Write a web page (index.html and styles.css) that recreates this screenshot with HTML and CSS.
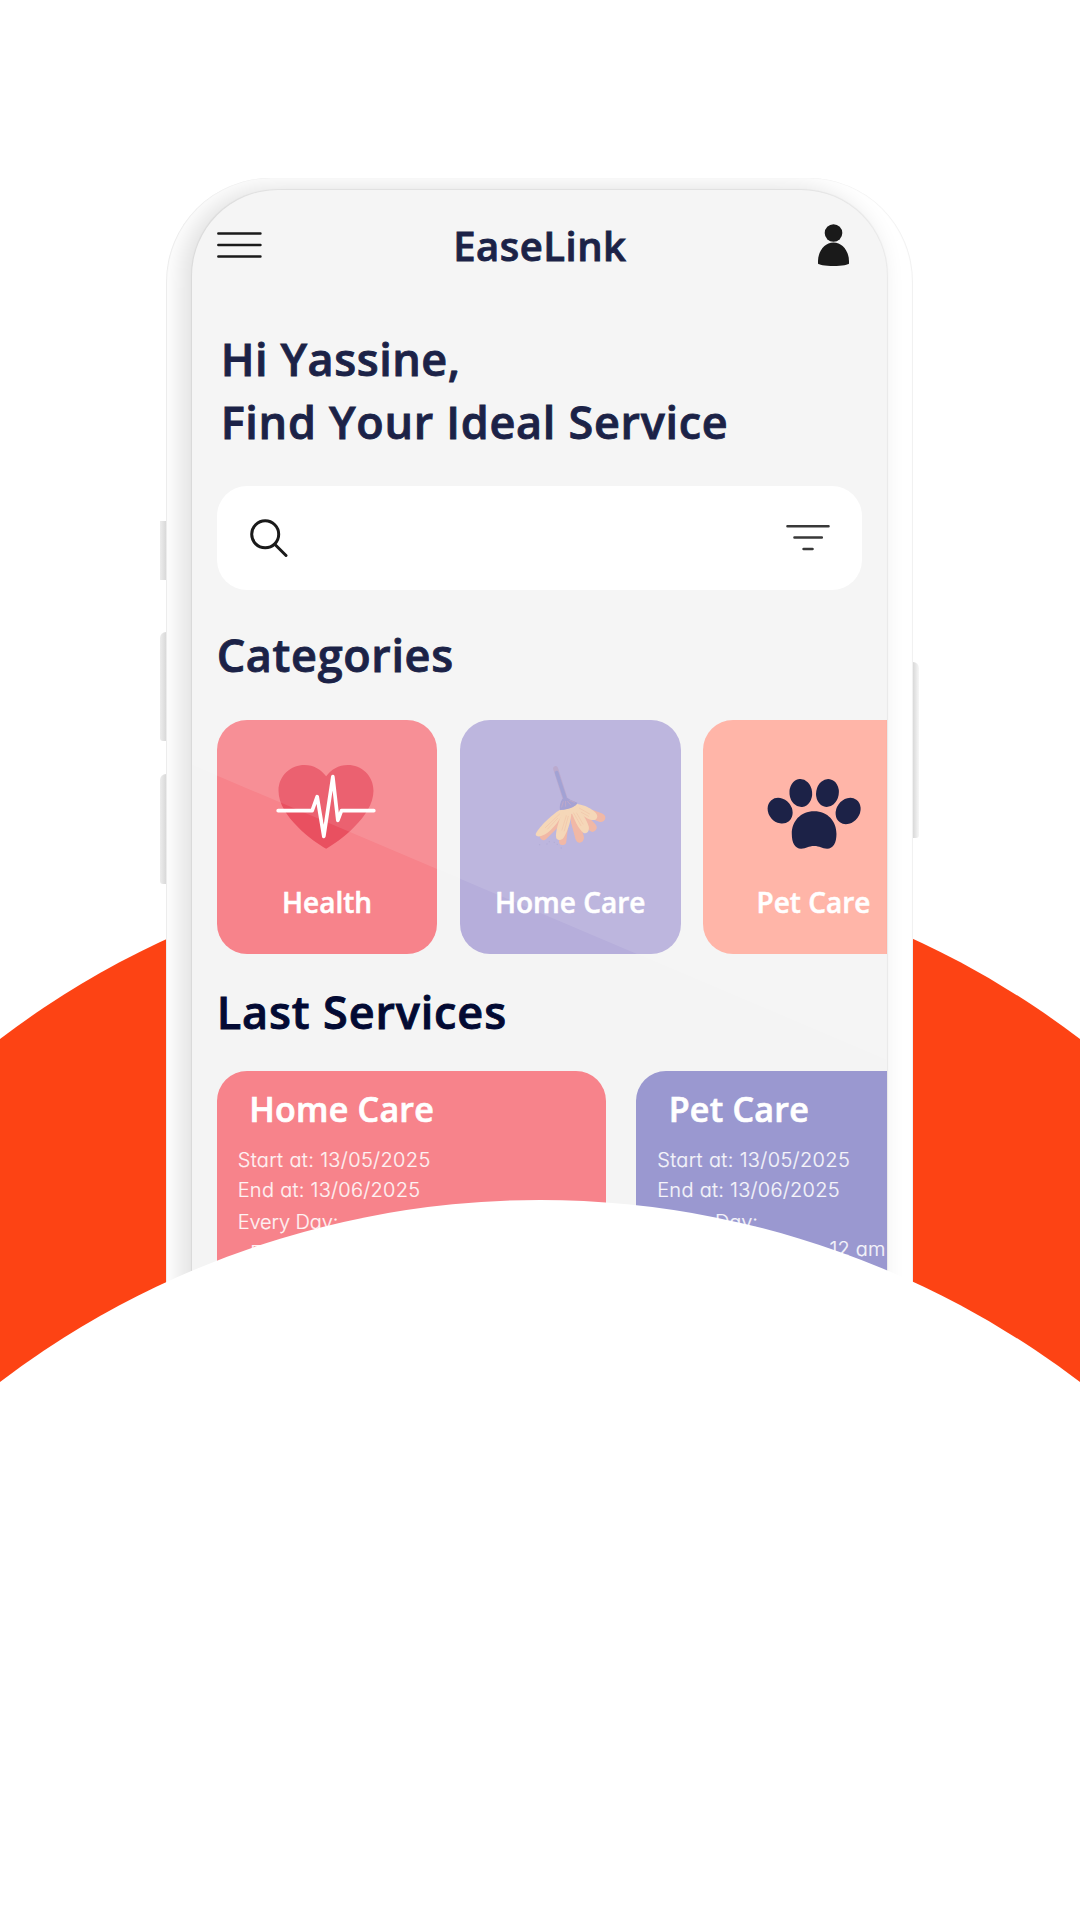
FILE: index.html
```html
<!DOCTYPE html>
<html lang="en">
<head>
<meta charset="utf-8">
<title>EaseLink</title>
<link rel="stylesheet" href="styles.css">
</head>
<body>
<div class="stage">
  <div class="disc disc--orange"></div>
  <div class="phone">
    <i class="key key--mute"></i>
    <i class="key key--up"></i>
    <i class="key key--down"></i>
    <i class="key key--power"></i>
    <div class="bezel">
      <main class="screen">
        <header class="topbar">
          <svg class="menu" viewBox="0 0 45 28" fill="none" stroke="#000" stroke-width="2.4" stroke-linecap="round"><path d="M1.3 2.5H43.500M1.300 14H43.500M1.300 25.500H43.500"/></svg>
          <h1 class="brand">EaseLink</h1>
          <svg class="user" viewBox="0 0 31 42"><circle cx="15.500" cy="9" r="8.800"/><path d="M15.500 18.500C24 18.500 31 27 31 37V39.500C31 40.500 24 42 15.500 42S0 40.500 0 39.500V37C0 27 7 18.500 15.500 18.500Z"/></svg>
        </header>
        <p class="greeting">Hi Yassine,<br><span class="greeting-sub">Find Your Ideal Service</span></p>
        <div class="search">
          <svg class="lens" viewBox="0 0 38 39" fill="none" stroke="#000" stroke-width="3"><circle cx="15.200" cy="15.300" r="13.500"/><path d="M25 25.500L36 36.500" stroke-linecap="round"/></svg>
          <svg class="filter" viewBox="0 0 44 28" fill="none" stroke="#222" stroke-width="2.600" stroke-linecap="round"><path d="M1.500 2.200H42.500M8.500 13.500H35.800M17.600 25H26.500"/></svg>
        </div>
        <h2 class="heading heading--categories">Categories</h2>
        <div class="categories">
          <article class="category category--health">
            <svg class="art" viewBox="0 0 220.500 163.400"><g transform="translate(-26.500 -20) scale(.33333)">
              <path fill="#e95060" d="M407 446C370 425 264 350 264 272C264 226 302 195 342 195C370 195 392 209 407 229C421 209 444 195 472 195C512 195 549 226 549 272C549 350 444 425 407 446Z"/>
              <path fill="none" stroke="#fff" stroke-width="11" stroke-linecap="round" stroke-linejoin="round" d="M263 332H365L380 290L400 409L427 230L442 361L453 332H550"/>
            </g></svg>
            <h3 class="label">Health</h3>
          </article>
          <article class="category category--home">
            <svg class="art" viewBox="0 0 220.500 163.400"><g transform="translate(60.300 35) scale(.33333)">
              <g stroke="#f0b09c" stroke-linecap="round" stroke-width="22">
                <path d="M140 175L70 244M135 190L127 259M160 185L178 252M180 185L217 218M180 170L244 188" />
                <path stroke-width="26" d="M165 200L178 248M195 195L216 217M215 178L241 188"/>
              </g>
              <g fill="#f4d3b0">
                <path d="M118 165C95 178 50 222 46 238C48 248 62 245 75 238C98 224 122 190 132 168Z"/>
                <path d="M130 166C117 190 103 235 108 250C113 258 125 257 131 247C145 222 154 190 153 168Z"/>
                <path d="M150 163C160 190 176 226 190 234C202 238 208 226 205 214C200 196 186 175 172 155Z"/>
                <path d="M168 148C195 148 232 170 231 185C229 198 214 197 203 191C187 183 176 170 165 158Z"/>
              </g>
              <path fill="#f4d3b0" d="M119 165C140 163 160 156 171 146L185 160L160 176L135 178Z"/>
              <g fill="none" stroke="#f0bea0" stroke-width="2" stroke-linecap="round"><path d="M118 177L75 218M112 190L82 222M138 182L125 225M144 184L132 228M160 174L182 212M169 174L188 207M178 160L208 177M183 172L205 184"/></g>
              <path fill="none" stroke="#b4a1c8" stroke-width="15" stroke-linecap="round" d="M106 41L134 130"/>
              <path fill="none" stroke="#9898d0" stroke-width="11" stroke-linecap="round" d="M109 53L135 132"/>
              <path fill="#9c98ce" d="M126 132C136 128 143 128 150 134L171 143C171 151 151 163 119 165C117 155 120 140 126 132Z"/>
              <path fill="none" stroke="#bd9fc0" stroke-width="2.500" stroke-linecap="round" d="M129 140L124 156M136 139V154M142 139L151 150M148 136L163 142"/>
              <g fill="#aaa4d0"><circle cx="58" cy="269" r="2"/><circle cx="80" cy="267" r="2"/><circle cx="87" cy="260" r="2"/><circle cx="102" cy="262" r="2"/><circle cx="111" cy="268" r="2"/><circle cx="123" cy="279" r="2"/></g>
            </g></svg>
            <h3 class="label">Home Care</h3>
          </article>
          <article class="category category--pet">
            <svg class="art" viewBox="0 0 220.500 163.400"><g transform="translate(-13.200 -20) scale(.33333)" fill="#030a33">
              <ellipse cx="333" cy="279" rx="34" ry="42" transform="rotate(-6 333 279)"/>
              <ellipse cx="413" cy="279" rx="34" ry="42" transform="rotate(10 413 279)"/>
              <ellipse cx="271" cy="332" rx="35" ry="41" transform="rotate(-40 271 332)"/>
              <ellipse cx="475" cy="333" rx="35" ry="42" transform="rotate(36 475 333)"/>
              <path d="M373 334C414 334 440 364 440 402C440 428 431 446 412 446C396 446 390 438 373 438C356 438 350 446 334 446C315 446 306 428 306 402C306 364 332 334 373 334Z"/>
            </g></svg>
            <h3 class="label">Pet Care</h3>
          </article>
        </div>
        <h2 class="heading heading--last">Last Services</h2>
        <div class="services">
          <article class="service service--home">
            <h3 class="service-name">Home Care</h3>
            <p class="date date--start">Start at: 13/05/2025</p>
            <p class="date date--end">End at: 13/06/2025</p>
            <p class="days">Every Day:</p>
            <p class="slot slot--low"><span>From 09 am to</span><span>12 am</span></p>
          </article>
          <article class="service service--pet">
            <h3 class="service-name">Pet Care</h3>
            <p class="date date--start">Start at: 13/05/2025</p>
            <p class="date date--end">End at: 13/06/2025</p>
            <p class="days">Every Day:</p>
            <p class="slot"><span>From 09 am to</span><span>12 am</span></p>
          </article>
        </div>
      </main>
    </div>
  </div>
  <div class="disc disc--white"></div>
</div>
</body>
</html>
```
FILE: styles.css
```css
* { box-sizing: border-box; margin: 0; padding: 0; }
body { background: #fff; }

.stage {
  position: relative;
  width: 1080px;
  height: 1920px;
  overflow: hidden;
  background: #fff;
  font-family: "Open Sans", "Noto Sans", sans-serif;
  font-weight: 600;
}

/* Overlapping hill shapes behind and in front of the phone */
.disc {
  position: absolute;
  left: -352px;
  width: 1784px;
  height: 1784px;
  border-radius: 50%;
}
.disc--orange { top: 857px; background: #fd4314; }
.disc--white { top: 1200px; background: #fff; }

.phone {
  position: relative;
  width: 747px;
  margin-left: 165.500px;
  padding-top: 178px;
}
.key { position: absolute; background: linear-gradient(90deg, #ececec, #d9d9d9); }
.key--mute { left: -6px; top: 521px; width: 6px; height: 59px; }
.key--up { left: -6px; top: 632px; width: 6px; height: 109px; border-radius: 6px 0 0 3px; }
.key--down { left: -6px; top: 774px; width: 6px; height: 110px; border-radius: 6px 0 0 3px; }
.key--power { right: -6px; top: 662px; width: 6px; height: 176px; border-radius: 0 6px 3px 0; background: linear-gradient(90deg, #d9d9d9, #f6f6f6); }

.bezel {
  height: 1220px;
  padding: 12px 26px 0 26.500px;
  overflow: hidden;
  border-radius: 104px 104px 0 0;
  background: #fff;
  box-shadow: inset 1px 0 1px #eee, inset -1px 0 1px #f0f0f0;
}
.screen {
  position: relative;
  height: 1208px;
  padding-left: 24.700px;
  overflow: hidden;
  border-radius: 86px 86px 0 0;
  background: #f4f4f4;
  box-shadow: 0 0 1px .5px rgba(0, 0, 0, .06), -9px 0 24px 2px rgba(0, 0, 0, .12);
}
/* Diagonal glass glare */
.screen::after {
  content: "";
  position: absolute;
  inset: 0;
  background: rgba(255, 255, 255, .1);
  clip-path: polygon(0 0, 100% 0, 100% 870px, 0 575px);
}

.topbar {
  display: flex;
  align-items: center;
  justify-content: space-between;
  height: 83px;
  padding: 27px 37.500px 0 0;
}
.menu { width: 45px; height: 28px; }
.user { width: 31px; height: 42px; }
.brand { padding-top: 1.500px; font-size: 40px; font-weight: 600; line-height: 56px; letter-spacing: .5px; color: #030a33; }
.brand, .greeting, .heading { -webkit-text-stroke: .9px #030a33; }

.greeting {
  margin-top: 53.800px;
  padding-left: 4px;
  font-size: 45px;
  line-height: 63px;
  letter-spacing: .55px;
  color: #030a33;
}
.greeting-sub { letter-spacing: .7px; }

.search {
  display: flex;
  align-items: center;
  justify-content: space-between;
  width: 645px;
  height: 104px;
  margin-top: 33px;
  padding: 0 31.500px 0 33px;
  border-radius: 30px;
  background: #fff;
}
.lens { width: 38px; height: 39px; margin-top: 1px; }
.filter { width: 44px; height: 28px; }

.heading { font-size: 45px; font-weight: 600; line-height: 60px; color: #030a33; }
.heading--categories { margin-top: 35px; letter-spacing: .65px; }
.heading--last { margin-top: 28.300px; letter-spacing: .88px; }

.categories { display: flex; gap: 22.500px; margin-top: 35px; }
.category { flex: none; width: 220.700px; height: 234px; border-radius: 30px; overflow: hidden; text-align: center; }
.category--health { background: #f7838b; }
.category--home { background: #b6aedb; }
.category--pet { background: #ffad9f; }
.art { display: block; width: 220.500px; height: 163.400px; }
.label { font-size: 28px; font-weight: 600; line-height: 38px; color: #fff; -webkit-text-stroke: .5px #fff; }

.services { display: flex; gap: 30px; margin-top: 28.500px; }
.service { flex: none; width: 389.500px; height: 300px; padding: 15.300px 0 0 21px; border-radius: 30px; color: #fff; }
.service--home { background: #f7838b; }
.service--pet { background: #9a98d0; }
.service-name { padding-left: 11.500px; font-size: 34px; font-weight: 600; line-height: 46px; letter-spacing: .25px; -webkit-text-stroke: .7px #fff; }
.date, .days, .slot {
  font-family: Inter, sans-serif;
  font-size: 20px;
  font-weight: 300;
  font-feature-settings: "cv11";
  -webkit-text-stroke: .2px #fff;
  opacity: .9;
}
.date { line-height: 30.500px; letter-spacing: .36px; }
.date--start { margin-top: 12.800px; }
.date--end { letter-spacing: .28px; }
.days { margin-top: 1.700px; line-height: 30.700px; letter-spacing: -.1px; }
.slot { display: flex; justify-content: space-between; width: 228.500px; padding-left: 12.500px; line-height: 22.600px; letter-spacing: .2px; white-space: nowrap; }
.slot--low { margin-top: 4px; }
```
